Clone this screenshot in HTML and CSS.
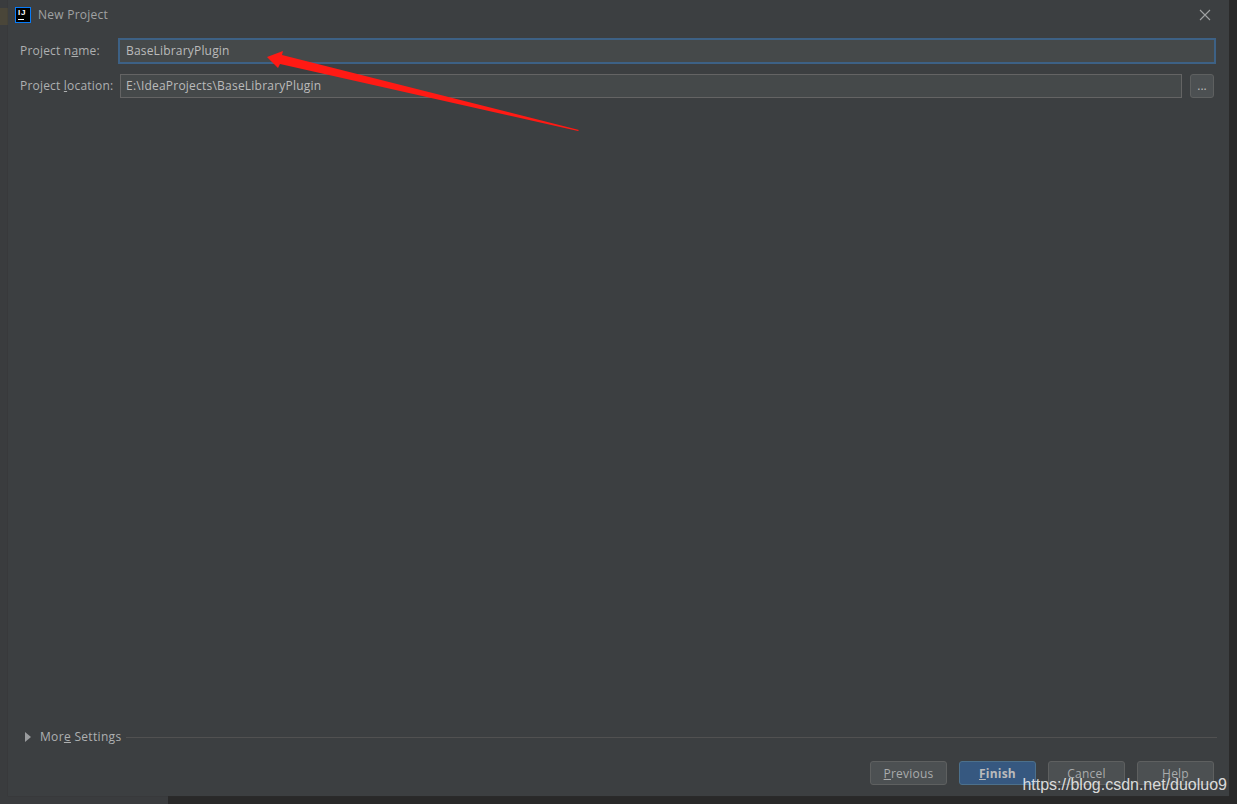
FILE: index.html
```html
<!DOCTYPE html>
<html lang="en">
<head>
<meta charset="utf-8">
<title>New Project</title>
<link rel="stylesheet" href="styles.css">
</head>
<body>
<div class="desktop">
  <div class="left-strip"></div>
  <div class="stripe"></div>
  <div class="bottom-left"></div>
  <div class="dialog">
    <header class="titlebar">
      <span class="app-icon"><span class="app-icon-text">IJ</span><span class="app-icon-bar"></span></span>
      <span class="title">New Project</span>
      <svg class="close" width="12" height="12" viewBox="0 0 12 12"><path d="M1 1L11 11M11 1L1 11" stroke="#a0a2a3" stroke-width="1.1" fill="none"/></svg>
    </header>
    <main class="form">
      <div class="row">
        <label class="label">Project n<u>a</u>me:</label>
        <div class="field field-focus">BaseLibraryPlugin</div>
      </div>
      <div class="row row-second">
        <label class="label">Project <u>l</u>ocation:</label>
        <div class="field">E:\IdeaProjects\BaseLibraryPlugin</div>
        <button class="browse">...</button>
      </div>
    </main>
    <section class="more">
      <svg class="triangle" width="6" height="10" viewBox="0 0 6 10"><path d="M0 0L6 5L0 10Z" fill="#9a9c9e"/></svg>
      <span class="more-label">Mor<u>e</u> Settings</span>
      <span class="more-line"></span>
    </section>
    <footer class="buttons">
      <button class="btn"><u>P</u>revious</button>
      <button class="btn btn-primary"><u>F</u>inish</button>
      <button class="btn">Cancel</button>
      <button class="btn">Help</button>
    </footer>
  </div>
  <svg class="arrow" width="320" height="92" viewBox="0 0 320 92"><path d="M0 17L16 11L15 15L312 90L311 91L13 24L11 28Z" fill="#ff1a14"/></svg>
  <div class="watermark">https://blog.csdn.net/duoluo9</div>
</div>
</body>
</html>
```
FILE: styles.css
```css
html, body {
  margin: 0;
  padding: 0;
  width: 1237px;
  height: 804px;
  overflow: hidden;
  background: #292929;
}
.desktop {
  position: relative;
  width: 1237px;
  height: 804px;
  background: #292929;
  font-family: "Open Sans", "Noto Sans", sans-serif;
  font-size: 12px;
  color: #bbbbbb;
  overflow: hidden;
}
.left-strip {
  position: absolute;
  left: 0;
  top: 0;
  width: 8px;
  height: 804px;
  background: #3a3c3e;
}
.stripe {
  position: absolute;
  left: 0;
  top: 8px;
  width: 8px;
  height: 17px;
  background: #4a4639;
}
.bottom-left {
  position: absolute;
  left: 0;
  top: 796px;
  width: 168px;
  height: 8px;
  background: #3a3c3e;
}
.dialog {
  position: absolute;
  left: 8px;
  top: 0;
  width: 1221px;
  height: 796px;
  box-sizing: border-box;
  background: #3c3f41;
  display: flex;
  flex-direction: column;
  box-shadow: 0 0 1px #2f3132;
}
.titlebar {
  display: flex;
  align-items: center;
  height: 29px;
  padding: 0 18px 0 7px;
  gap: 7px;
}
.app-icon {
  width: 16px;
  height: 16px;
  background: #000;
  border: 1px solid #087cfa;
  position: relative;
  display: block;
  box-sizing: border-box;
  flex: none;
}
.app-icon-text {
  position: absolute;
  left: 2px;
  top: 1px;
  font: bold 8px/8px "Liberation Sans", sans-serif;
  color: #fff;
  letter-spacing: 0.8px;
}
.app-icon-bar {
  position: absolute;
  left: 2px;
  bottom: 2px;
  width: 6px;
  height: 1px;
  background: #fff;
}
.title {
  flex: 1;
  color: #a0a2a3;
  font-size: 12px;
  letter-spacing: 0.25px;
}
.close { flex: none; }
.form {
  flex: 1;
  padding: 9px 15px 0 12px;
}
.row {
  display: flex;
  align-items: center;
  height: 26px;
}
.row-second { margin-top: 10px; height: 24px; }
.label {
  width: 100px;
  flex: none;
  color: #aeb0b1;
  letter-spacing: 0.2px;
  white-space: nowrap;
  margin-bottom: 2px;
}
.field {
  flex: 1;
  box-sizing: border-box;
  height: 24px;
  line-height: 22px;
  padding-left: 5px;
  background: #45494a;
  border: 1px solid #646464;
  color: #bbbbbb;
  letter-spacing: 0.22px;
}
.field-focus {
  height: 26px;
  border: 2px solid #3d6185;
  line-height: 22px;
  padding-left: 6px;
  margin: 0 -2px 0 -2px;
  letter-spacing: 0.18px;
}
.browse {
  flex: none;
  width: 24px;
  height: 24px;
  margin-left: 8px;
  padding: 0;
  background: #4c5052;
  border: 1px solid #5e6060;
  border-radius: 3px;
  color: #bbbbbb;
  font: 12px/20px "Open Sans", sans-serif;
}
.more {
  display: flex;
  align-items: center;
  height: 18px;
  padding: 0 12px 0 17px;
}
.triangle { flex: none; margin-right: 9px; }
.more-label {
  color: #aeb0b1;
  letter-spacing: 0.32px;
  white-space: nowrap;
  margin-bottom: 2px;
}
.more-line {
  flex: 1;
  height: 1px;
  background: #515151;
  margin-left: 5px;
}
.buttons {
  display: flex;
  justify-content: flex-end;
  gap: 12px;
  padding: 15px 15px 11px 0;
}
.btn {
  box-sizing: border-box;
  width: 77px;
  height: 24px;
  padding: 2px 0 0;
  background: #4c5052;
  border: 1px solid #5e6060;
  border-radius: 3px;
  color: #a9abac;
  font: 12px/20px "Open Sans", sans-serif;
  letter-spacing: 0.2px;
}
.btn-primary {
  background: #365880;
  border-color: #4c708c;
  color: #bbbbbb;
  font-weight: 700;
  padding-top: 1px;
}
.arrow {
  position: absolute;
  left: 267px;
  top: 40px;
}
.watermark {
  position: absolute;
  right: 10px;
  top: 774px;
  font: 16px/22px "Liberation Sans", sans-serif;
  color: rgba(238, 238, 238, 0.9);
  white-space: nowrap;
}
```
